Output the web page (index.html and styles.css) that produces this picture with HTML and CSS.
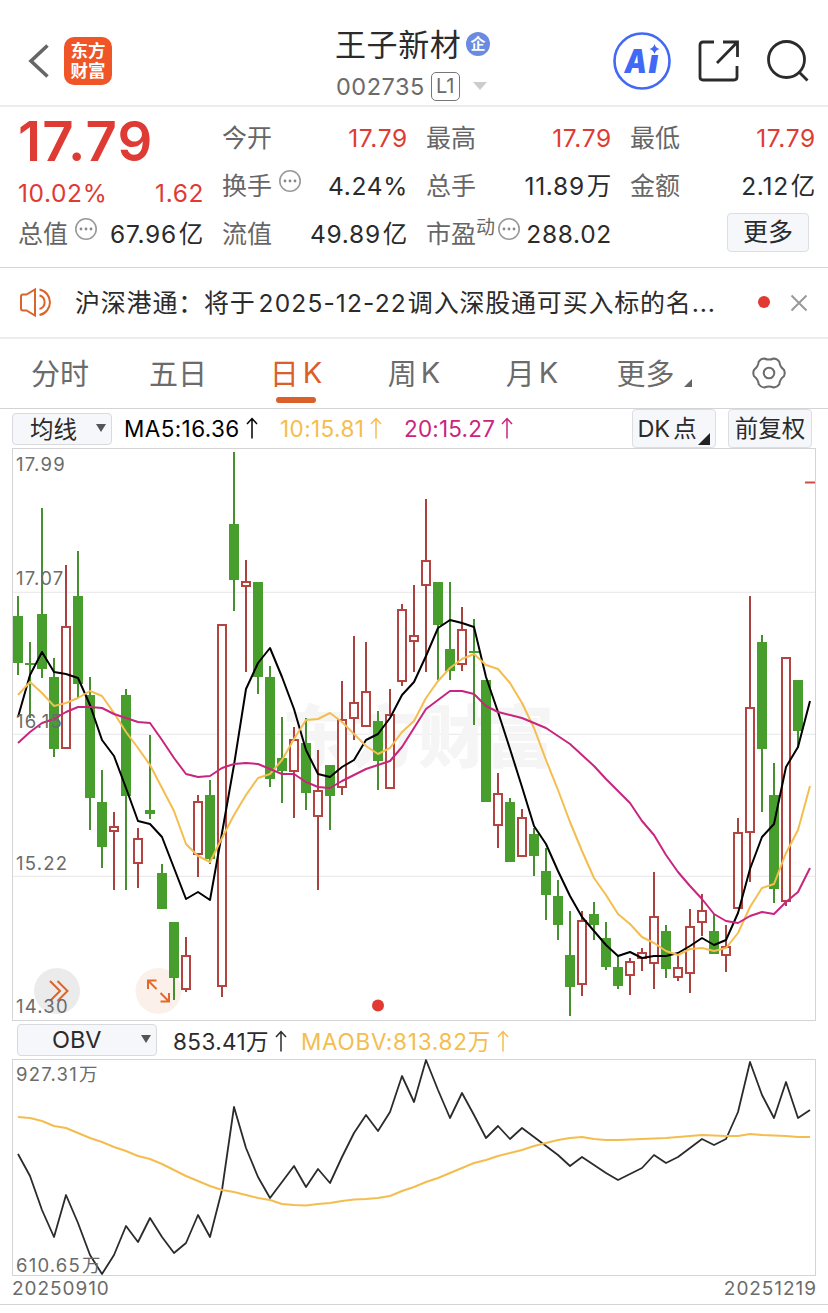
FILE: index.html
```
<!DOCTYPE html>
<html lang="zh-CN">
<head>
  <meta charset="UTF-8" />
  <title>王子新材 002735</title>
  <link rel="stylesheet" href="styles.css">
</head>
<body>

  <header>
    <div class="header-left">
      <svg class="back" width="22" height="36" viewBox="0 0 22 36"><path d="M19.5 2.5L3 18L19.5 33.5" fill="none" stroke="#666" stroke-width="3.6" /></svg>
      <div class="logo"><span>东方</span><span>财富</span></div>
    </div>
    <div class="header-title">
      <div class="name">王子新材<i class="badge">企</i></div>
      <div class="code"><span class="num">002735</span><span class="level">L1</span><i class="down"></i></div>
    </div>
    <div class="header-right">
      <svg width="60" height="60" viewBox="0 0 60 60">
        <circle cx="30" cy="30" r="27.5" fill="none" stroke="#4169f5" stroke-width="2.6" />
        <text class="ai" x="12.500" y="41.5" textLength="22.500" lengthAdjust="spacingAndGlyphs">A</text>
        <text class="ai" x="36.5" y="41.5">ı</text>
        <path d="M42.500 13Q43.500 17 47.500 18Q43.500 19 42.500 23Q41.500 19 37.500 18Q41.500 17 42.500 13Z" fill="#4169f5" />
      </svg>
      <svg width="44" height="44" viewBox="0 0 44 44" fill="none" stroke="#2b2b2b" stroke-width="2.800">
        <path d="M17 3H6Q3 3 3 6V38Q3 41 6 41H37Q40 41 40 38V27" />
        <path d="M26 3H40.500V18M40 3.500L20 24" />
      </svg>
      <svg width="44" height="44" viewBox="0 0 44 44" fill="none" stroke="#2b2b2b" stroke-width="2.800">
        <circle cx="20.500" cy="20.500" r="18" />
        <path d="M32.500 32.500L41.500 41.500" />
      </svg>
    </div>
  </header>

  <section class="stats">
    <div class="col first">
      <div class="price">17.79</div>
      <div class="change red"><span>10.02%</span><span>1.62</span></div>
      <div class="row total"><label>总值</label><svg class="more-dots"><use href="#dots" /></svg><b>67.96<em>亿</em></b></div>
    </div>
    <div class="col">
      <div class="row"><label>今开</label><b class="red">17.79</b></div>
      <div class="row"><label>换手</label><svg class="more-dots"><use href="#dots" /></svg><b>4.24%</b></div>
      <div class="row"><label>流值</label><b>49.89<em>亿</em></b></div>
    </div>
    <div class="col">
      <div class="row"><label>最高</label><b class="red">17.79</b></div>
      <div class="row"><label>总手</label><b>11.89<em>万</em></b></div>
      <div class="row pe"><label>市盈<sup>动</sup></label><svg class="more-dots"><use href="#dots" /></svg><b>288.02</b></div>
    </div>
    <div class="col">
      <div class="row"><label>最低</label><b class="red">17.79</b></div>
      <div class="row"><label>金额</label><b>2.12<em>亿</em></b></div>
      <div class="row"><button class="more-btn">更多</button></div>
    </div>
  </section>

  <section class="notice">
    <svg width="36" height="32" viewBox="0 0 36 32" fill="none" stroke="#d9652b" stroke-width="2">
      <path d="M16 2.500V28.500L7.500 23.500H4Q2 23.500 2 21.500V9.500Q2 7.500 4 7.500H7.500Z" />
      <path d="M20.500 8.500A7 7 0 0 1 20.500 22M20.500 2.500A13 13 0 0 1 20.500 28" />
    </svg>
    <p>沪深港通：将于<span>2025-12-22</span>调入深股通可买入标的名...</p>
    <i class="dot"></i>
    <svg width="18" height="18" viewBox="0 0 18 18"><path d="M1.500 1.500L16.500 16.500M16.500 1.500L1.500 16.500" stroke="#999" stroke-width="2" /></svg>
  </section>

  <nav>
    <a>分时</a>
    <a>五日</a>
    <a class="active">日<span>K</span></a>
    <a>周<span>K</span></a>
    <a>月<span>K</span></a>
    <a class="tab-more">更多<i></i></a>
    <a class="settings">
      <svg width="36" height="36" viewBox="-18 -18 36 36" fill="none" stroke="#6b6b6b" stroke-width="2">
        <path d="M14.900 -3.300Q16.500 0 14.900 3.300Q10.800 6.200 10.300 11.300Q8.250 14.300 4.600 14.500Q0 12.300 -4.600 14.500Q-8.250 14.300 -10.300 11.300Q-10.800 6.200 -14.900 3.300Q-16.500 0 -14.900 -3.300Q-10.800 -6.200 -10.300 -11.300Q-8.250 -14.300 -4.600 -14.500Q0 -12.300 4.600 -14.500Q8.250 -14.300 10.300 -11.300Q10.800 -6.200 14.900 -3.300Z" />
        <circle r="5.300" />
      </svg>
    </a>
  </nav>

  <div class="indicator">
    <div class="select">均线<i></i></div>
    <span class="ma5">MA5:16.36<svg class="up"><use href="#up" /></svg></span>
    <span class="ma10">10:15.81<svg class="up"><use href="#up" /></svg></span>
    <span class="ma20">20:15.27<svg class="up"><use href="#up" /></svg></span>
    <div class="chip dk">DK<span>点</span><i></i></div>
    <div class="chip">前复权</div>
  </div>

  <svg class="chart" id="kline" width="804" height="573" viewBox="12 448 804 573">
    <rect x="12.500" y="448.500" width="803" height="572" fill="#fff" stroke="#d4d4d8" />
    <path d="M13 592.300H815M13 734.300H815M13 876.300H815" stroke="#ececee" stroke-width="1.300" />
    <text class="watermark" x="282" y="762">东方财富</text>
    <circle cx="57" cy="991" r="23" fill="#ebebeb" />
    <path d="M50 981L60 991L50 1001M57.500 981L67.500 991L57.500 1001" fill="none" stroke="#d9652b" stroke-width="2" />
    <circle cx="158.500" cy="991" r="23" fill="#fcf1ea" />
    <path d="M148 989V980.500H156.500M148.500 981L156.500 989M169 993V1001.500H160.500M168.500 1001L160.500 993" fill="none" stroke="#e06a2c" stroke-width="2" />
    <g id="candles"></g>
    <g id="lines"></g>
    <text class="axis" x="16" y="470.500">17.99</text>
    <text class="axis" x="16" y="584.500">17.07</text>
    <text class="axis" x="16" y="727.500">16.15</text>
    <text class="axis" x="16" y="870">15.22</text>
    <text class="axis" x="16" y="1012.500">14.30</text>
    <circle cx="378" cy="1005.500" r="6" fill="#e03a32" />
  </svg>

  <div class="indicator obv">
    <div class="select">OBV<i></i></div>
    <span class="obv-value">853.41万<svg class="up"><use href="#up" /></svg></span>
    <span class="maobv">MAOBV:813.82万<svg class="up"><use href="#up" /></svg></span>
  </div>

  <svg class="chart" width="804" height="217" viewBox="12 1059 804 217">
    <rect x="12.500" y="1059.500" width="803" height="216" fill="#fff" stroke="#d4d4d8" />
    <g id="obv"></g>
    <text class="axis" x="16" y="1080.500">927.31<tspan dx="1">万</tspan></text>
    <text class="axis" x="16" y="1271.500">610.65<tspan dx="1">万</tspan></text>
  </svg>

  <div class="dates"><span>20250910</span><span>20251219</span></div>

  <svg class="defs">
    <symbol id="dots" viewBox="0 0 24 24">
      <circle cx="12" cy="12" r="10.200" fill="none" stroke="#999" stroke-width="1.600" />
      <g fill="#888"><circle cx="7" cy="12" r="1.400" /><circle cx="12" cy="12" r="1.400" /><circle cx="17" cy="12" r="1.400" /></g>
    </symbol>
    <symbol id="up" viewBox="0 0 12 22">
      <path d="M6 21.500V1.500M1 7L6 1.500L11 7" fill="none" stroke="currentColor" stroke-width="1.500" />
    </symbol>
  </svg>

  <script src="chart.js"></script>
</body>
</html>
```
FILE: styles.css
```
body {
  margin: 0;
  width: 828px;
  height: 1313px;
  overflow: hidden;
  background: #fff;
  color: #2b2b2b;
  font-family: Inter, 'Noto Sans CJK SC', sans-serif;
}

i, em {
  font-style: normal;
}

header {
  display: grid;
  grid-template-columns: 1fr auto 1fr;
  height: 105px;
  border-bottom: 2px solid #ececec;
}

.header-left {
  display: flex;
  align-items: center;
  padding: 16px 0 0 28px;
}

.logo {
  display: flex;
  flex-direction: column;
  align-items: center;
  justify-content: center;
  width: 48px;
  height: 48px;
  margin-left: 14px;
  border-radius: 10px;
  background: #ef5526;
  color: #fff;
  font-size: 17.5px;
  font-weight: 700;
  line-height: 20px;
}

.header-title {
  width: 160px;
  padding-top: 22px;
}

.name {
  display: flex;
  align-items: center;
  height: 40px;
  padding-left: 1px;
  font-size: 31px;
  letter-spacing: 0.6px;
  white-space: nowrap;
}

.badge {
  width: 24px;
  height: 24px;
  margin: 4px 0 0 5px;
  border-radius: 50%;
  background: #6a8be0;
  color: #fff;
  font-size: 15px;
  font-weight: 700;
  line-height: 23px;
  text-align: center;
}

.code {
  display: flex;
  align-items: center;
  height: 40px;
  margin-top: 4px;
  padding-left: 2px;
  color: #6b6b6b;
  font-size: 23.5px;
}

.num {
  letter-spacing: 0.5px;
}

.level {
  width: 27px;
  height: 27px;
  margin-left: 6px;
  border: 1px solid #777;
  border-radius: 5px;
  font-size: 20px;
  line-height: 27px;
  text-align: center;
}

.down {
  margin-left: 13px;
  border: 7px solid transparent;
  border-top: 8px solid #ccc;
  border-bottom: 0;
}

.header-right {
  display: flex;
  align-items: center;
  justify-content: flex-end;
  gap: 25px;
  padding: 16px 18px 0 0;
}

.ai {
  fill: #4169f5;
  font-size: 33px;
  font-weight: 900;
  font-style: italic;
}

.stats {
  display: grid;
  grid-template-columns: repeat(4, 184px);
  column-gap: 20px;
  height: 153px;
  padding: 7px 14px 0 18px;
  border-bottom: 1px solid #d4d4d4;
}

.red {
  color: #de3b34;
}

.row {
  display: flex;
  height: 48px;
  line-height: 48px;
}

.row label {
  color: #666;
  font-size: 25px;
}

.row b {
  margin: 0 -2px 0 auto;
  font-size: 24.5px;
  font-weight: 400;
  letter-spacing: 0.7px;
  white-space: nowrap;
}

.row em {
  margin-left: 2px;
}

.row sup {
  position: relative;
  top: -9px;
  font-size: 19px;
  line-height: 0;
  vertical-align: baseline;
}

.more-dots {
  width: 24px;
  height: 24px;
  margin: 7px 0 0 6px;
}

.pe .more-dots {
  margin-left: 2px;
}

.price {
  height: 54px;
  color: #de3b34;
  font-size: 54.5px;
  font-weight: 600;
  line-height: 54px;
  letter-spacing: 1.2px;
}

.change {
  display: flex;
  justify-content: space-between;
  height: 42px;
  margin-right: -2px;
  font-size: 24.5px;
  line-height: 50px;
  letter-spacing: 0.6px;
}

.more-btn {
  width: 82px;
  height: 39px;
  margin: 3px 5px 0 auto;
  padding: 0;
  border: 1px solid #dcdee2;
  border-radius: 4px;
  background: #f5f7fa;
  color: #2b2b2b;
  font: 25px/37px Inter, 'Noto Sans CJK SC', sans-serif;
}

.notice {
  display: flex;
  align-items: center;
  height: 69px;
  padding: 0 20px 0 19px;
  border-bottom: 2px solid #ececec;
}

.notice p {
  width: 664px;
  margin: 0 0 4px 20px;
  font-size: 25px;
  letter-spacing: 0.8px;
  white-space: nowrap;
}

.notice p span {
  margin: 0 1px 0 3px;
  font-size: 24.5px;
  letter-spacing: 1.15px;
}

.notice .dot {
  width: 12px;
  height: 12px;
  margin: 0 20px 2px auto;
  border-radius: 50%;
  background: #e03a32;
}

nav {
  display: grid;
  grid-template-columns: repeat(7, 118px);
  height: 69px;
  padding-left: 1px;
  border-bottom: 1px solid #d4d4d4;
}

nav a {
  display: flex;
  align-items: center;
  justify-content: center;
  position: relative;
  box-sizing: border-box;
  padding-bottom: 3px;
  color: #6b6b6b;
  font-size: 29px;
}

nav a span {
  margin-left: 4px;
}

nav .active {
  color: #d9602a;
}

nav .active::after {
  content: "";
  position: absolute;
  bottom: 5px;
  width: 40px;
  height: 6px;
  border-radius: 3px;
  background: #d9602a;
}

.tab-more {
  padding-left: 8px;
}

.tab-more i {
  margin: 22px 0 0 9px;
  border-left: 8px solid transparent;
  border-bottom: 8px solid #666;
}

.settings {
  padding: 0 0 1px 1px;
}

.indicator {
  display: flex;
  align-items: center;
  height: 39px;
  padding: 0 16px 0 12px;
  font-size: 22.5px;
  letter-spacing: 0.4px;
  white-space: nowrap;
}

.select {
  display: flex;
  align-items: center;
  justify-content: space-between;
  box-sizing: border-box;
  width: 100px;
  height: 32px;
  padding: 0 5px 2px 17px;
  border: 1px solid #d8dade;
  border-radius: 4px;
  background: #f5f7fa;
  font-size: 23.5px;
  letter-spacing: 0;
}

.select i {
  border: 5px solid transparent;
  border-top: 8px solid #555;
  border-bottom: 0;
}

.up {
  width: 12px;
  height: 22px;
  margin-left: 6px;
  vertical-align: -2px;
}

.ma5 {
  width: 156px;
  margin-left: 12px;
  color: #000;
}

.ma10 {
  width: 124px;
  color: #f4bd4f;
}

.ma20 {
  color: #c9257f;
  letter-spacing: 0.2px;
}

.chip {
  box-sizing: border-box;
  width: 84px;
  height: 39px;
  margin-left: 12px;
  border: 1px solid #dcdee2;
  border-radius: 4px;
  background: #f5f7fa;
  font-size: 23.5px;
  line-height: 38px;
  letter-spacing: 0;
  text-align: center;
}

.dk {
  position: relative;
  margin-left: auto;
  padding-right: 14px;
}

.dk span {
  margin-left: 3px;
}

.dk i {
  position: absolute;
  right: 5px;
  bottom: 2px;
  border-left: 12px solid transparent;
  border-bottom: 12px solid #222;
}

.chart {
  display: block;
  margin-left: 12px;
}

.axis {
  fill: #6b6b6b;
  font-size: 18.5px;
  letter-spacing: 1.2px;
}

.watermark {
  fill: #f5f5f6;
  font-size: 68px;
  font-weight: 900;
}

.obv {
  height: 38px;
  padding-left: 17px;
}

.obv .select {
  width: 140px;
  padding-left: 34px;
}

.obv-value {
  width: 128px;
  margin-left: 16px;
}

.maobv {
  color: #f4bd4f;
  letter-spacing: 0.75px;
}

.dates {
  display: flex;
  justify-content: space-between;
  height: 28px;
  padding: 0 11px 0 12px;
  border-bottom: 1px solid #d4d4d4;
  color: #6b6b6b;
  font-size: 19px;
  line-height: 25px;
  letter-spacing: 0.95px;
}

.defs {
  display: none;
}
```
FILE: chart.js
```
// high, body top, body bottom, low, r = up / g = down
const candles = [
  [596, 616, 663, 675, 'g'], [642, 663, 665, 718, 'g'], [508, 614, 669, 678, 'g'], [658, 677, 749, 757, 'g'],
  [565, 626, 749, 749, 'r'], [551, 596, 684, 698, 'g'], [677, 695, 798, 830, 'g'], [770, 802, 847, 868, 'g'],
  [812, 826, 832, 890, 'r'], [689, 695, 796, 890, 'g'], [828, 838, 864, 888, 'r'], [735, 810, 814, 819, 'g'],
  [864, 873, 909, 909, 'g'], [922, 922, 978, 1000, 'g'], [937, 955, 990, 992, 'r'], [795, 801, 855, 877, 'r'],
  [780, 795, 859, 864, 'g'], [624, 624, 987, 997, 'r'], [452, 524, 580, 611, 'g'], [560, 581, 587, 672, 'r'],
  [582, 582, 677, 694, 'g'], [666, 677, 779, 787, 'g'], [717, 758, 771, 803, 'g'], [727, 739, 772, 818, 'r'],
  [718, 743, 793, 810, 'g'], [750, 790, 817, 890, 'r'], [765, 765, 796, 830, 'g'], [681, 719, 788, 795, 'r'],
  [636, 702, 719, 740, 'r'], [642, 691, 727, 727, 'r'], [711, 721, 761, 790, 'g'], [689, 714, 789, 789, 'r'],
  [604, 609, 682, 686, 'r'], [585, 635, 642, 672, 'r'], [499, 560, 586, 672, 'r'], [582, 582, 625, 680, 'g'],
  [582, 649, 671, 680, 'g'], [607, 629, 665, 671, 'r'], [619, 651, 653, 725, 'g'], [680, 680, 802, 802, 'g'],
  [773, 793, 826, 848, 'r'], [798, 802, 862, 862, 'g'], [809, 817, 857, 857, 'r'], [828, 834, 856, 876, 'g'],
  [848, 871, 895, 920, 'g'], [880, 896, 925, 940, 'g'], [911, 955, 987, 1016, 'g'], [911, 920, 985, 996, 'r'],
  [902, 914, 925, 940, 'g'], [922, 938, 967, 970, 'g'], [956, 967, 986, 989, 'g'], [958, 961, 976, 995, 'r'],
  [948, 952, 959, 971, 'r'], [872, 916, 964, 989, 'r'], [925, 931, 969, 978, 'g'], [953, 967, 978, 981, 'r'],
  [909, 926, 974, 993, 'r'], [894, 910, 923, 936, 'r'], [914, 931, 954, 954, 'g'], [925, 946, 956, 972, 'r'],
  [818, 832, 909, 909, 'r'], [596, 707, 833, 882, 'r'], [635, 642, 749, 812, 'g'], [763, 795, 889, 903, 'g'],
  [657, 657, 902, 906, 'r'], [680, 680, 731, 748, 'g']
];

const ma5 = [717, 675, 652, 672, 674, 678, 705, 740, 756, 788, 821, 824, 837, 868, 899, 892, 900, 833, 765, 689, 663, 648, 677, 709, 750, 774, 777, 767, 760, 740, 734, 718, 695, 682, 656, 628, 620, 623, 627, 677, 712, 749, 787, 826, 844, 871, 896, 917, 931, 945, 956, 952, 958, 956, 956, 953, 946, 938, 945, 940, 913, 869, 837, 824, 767, 747, 701];
const ma10 = [695, 682, 693, 706, 703, 698, 691, 696, 713, 732, 748, 765, 788, 811, 844, 856, 862, 838, 815, 795, 778, 774, 760, 739, 720, 719, 713, 722, 734, 746, 754, 748, 732, 721, 698, 681, 668, 659, 654, 665, 669, 683, 703, 728, 760, 790, 822, 851, 878, 895, 914, 924, 937, 943, 951, 955, 949, 948, 951, 948, 933, 907, 888, 884, 853, 830, 786];
const ma20 = [743, 732, 723, 719, 712, 707, 707, 708, 714, 718, 722, 723, 740, 758, 774, 777, 776, 768, 764, 763, 764, 769, 774, 774, 782, 787, 788, 781, 775, 769, 765, 761, 747, 728, 709, 700, 691, 691, 694, 706, 712, 715, 718, 723, 728, 736, 744, 755, 766, 779, 791, 803, 821, 835, 855, 872, 886, 899, 914, 921, 923, 916, 912, 914, 902, 892, 868];
const obv = [1154, 1176, 1210, 1237, 1195, 1223, 1255, 1274, 1255, 1226, 1242, 1218, 1237, 1253, 1243, 1215, 1237, 1190, 1107, 1148, 1177, 1198, 1182, 1166, 1187, 1169, 1183, 1157, 1133, 1115, 1131, 1112, 1076, 1102, 1060, 1090, 1118, 1093, 1115, 1138, 1126, 1139, 1128, 1137, 1146, 1155, 1166, 1157, 1165, 1173, 1180, 1174, 1168, 1155, 1163, 1157, 1148, 1139, 1145, 1139, 1112, 1062, 1095, 1118, 1082, 1118, 1110];
const maobv = [1117, 1118, 1121, 1126, 1128, 1133, 1138, 1142, 1147, 1151, 1156, 1159, 1164, 1170, 1176, 1181, 1186, 1190, 1192, 1195, 1198, 1200, 1204, 1205, 1205.5, 1204, 1203, 1201, 1199.5, 1199, 1198, 1196, 1191, 1187, 1182, 1178, 1173, 1168, 1163, 1160, 1156, 1153, 1150, 1146, 1143, 1140, 1138, 1137, 1139, 1140, 1140, 1139.5, 1139, 1138.5, 1138, 1137, 1136, 1135, 1135.5, 1136, 1136, 1134, 1135, 1135.5, 1136, 1137, 1137];

const step = 12;
const left = 18;

function line(data, color, width) {
  const points = data.map((y, i) => `${left + i * step},${y}`).join(' ');
  return `<polyline points="${points}" fill="none" stroke="${color}" stroke-width="${width}" stroke-linejoin="round" />`;
}

let html = '';
candles.forEach(([high, top, bottom, low, type], i) => {
  const x = left + i * step;
  if (type === 'g') {
    html += `<path d="M${x} ${high}V${low}" stroke="#46902f" stroke-width="2" />`;
    html += `<rect x="${x - 5}" y="${top}" width="10" height="${bottom - top}" fill="#479e2d" />`;
  } else {
    html += `<path d="M${x} ${high}V${top}M${x} ${bottom}V${low}" stroke="#a8433f" stroke-width="2" />`;
    html += `<rect x="${x - 4}" y="${top + 1}" width="8" height="${bottom - top - 2}" fill="#fff" stroke="#b5433f" stroke-width="2" />`;
  }
});
html += '<path d="M805 482.500H815" stroke="#d04a46" stroke-width="2" />';

document.getElementById('candles').innerHTML = html;
document.getElementById('lines').innerHTML = line(ma5, '#000', 2) + line(ma10, '#f4bd4f', 2) + line(ma20, '#c9257f', 2);
document.getElementById('obv').innerHTML = line(obv, '#2b2b2b', 1.8) + line(maobv, '#f4bd4f', 2);
```
